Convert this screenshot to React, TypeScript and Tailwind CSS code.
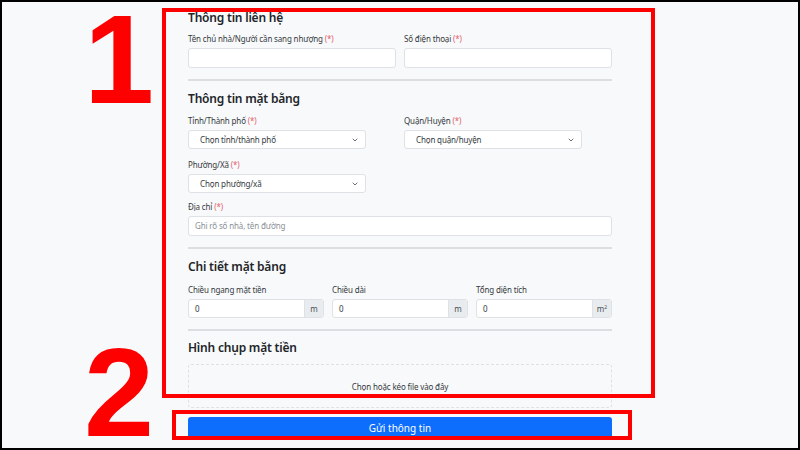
import { ChevronDown } from 'lucide-react'

const font = { fontFamily: '"Noto Sans", "Open Sans", Arial, sans-serif' }
const bigFont = { fontFamily: '"Liberation Sans", Arial, sans-serif' }

function Req() {
  return <span className="text-[#e4606d]"> (*)</span>
}

function Label({ children, req }: { children: React.ReactNode; req?: boolean }) {
  return (
    <div className="text-[8px] leading-[12px] tracking-[-0.15px] text-[#343a40]">
      {children}
      {req && <Req />}
    </div>
  )
}

function TextInput({ placeholder }: { placeholder?: string }) {
  return (
    <div className="mt-[3px] h-[20px] rounded-[3px] border border-[#dee2e6] bg-white px-[6px] text-[8px] leading-[18px] tracking-[-0.15px] text-[#8a9097]">
      {placeholder}
    </div>
  )
}

function Select({ text }: { text: string }) {
  return (
    <div className="mt-[3px] flex h-[19px] w-[178px] items-center justify-between rounded-[3px] border border-[#dee2e6] bg-white pl-[11px] pr-[6px] text-[8px] tracking-[-0.15px] text-[#343a40]">
      <span>{text}</span>
      <ChevronDown className="h-[8px] w-[8px] text-[#495057]" strokeWidth={2.5} />
    </div>
  )
}

function UnitInput({ label, unit }: { label: string; unit: React.ReactNode }) {
  return (
    <div className="flex-1">
      <Label>{label}</Label>
      <div className="mt-[3px] flex h-[19px] rounded-[3px] border border-[#dee2e6] bg-white text-[8px]">
        <div className="flex flex-1 items-center pl-[6px] text-[#343a40]">0</div>
        <div className="flex w-[19px] items-center justify-center border-l border-[#dee2e6] bg-[#e9ecef] text-[#495057]">{unit}</div>
      </div>
    </div>
  )
}

function Heading({ children }: { children: React.ReactNode }) {
  return (
    <div className="h-[16px] text-[12px] font-semibold leading-[16px] tracking-[-0.2px] text-[#212529]">{children}</div>
  )
}

function Divider() {
  return <div className="h-[2px] bg-[#dcdfe2]" />
}

export default function App() {
  return (
    <div className="relative h-[450px] w-[800px] overflow-hidden bg-[#f8f9fa]" style={font}>
      <div className="mx-auto w-[424px] pt-[10px]">
        <Heading>Thông tin liên hệ</Heading>
        <div className="mt-[7px] flex gap-[8px]">
          <div className="flex-1">
            <Label req>Tên chủ nhà/Người cần sang nhượng</Label>
            <TextInput />
          </div>
          <div className="flex-1">
            <Label req>Số điện thoại</Label>
            <TextInput />
          </div>
        </div>
        <div className="mt-[11px]">
          <Divider />
        </div>

        <div className="mt-[10px]">
          <Heading>Thông tin mặt bằng</Heading>
        </div>
        <div className="mt-[8px] flex gap-[38px]">
          <div>
            <Label req>Tỉnh/Thành phố</Label>
            <Select text="Chọn tỉnh/thành phố" />
          </div>
          <div>
            <Label req>Quận/Huyện</Label>
            <Select text="Chọn quận/huyện" />
          </div>
        </div>
        <div className="mt-[10px]">
          <Label req>Phường/Xã</Label>
          <Select text="Chọn phường/xã" />
        </div>
        <div className="mt-[8px]">
          <Label req>Địa chỉ</Label>
          <TextInput placeholder="Ghi rõ số nhà, tên đường" />
        </div>
        <div className="mt-[11px]">
          <Divider />
        </div>

        <div className="mt-[10px]">
          <Heading>Chi tiết mặt bằng</Heading>
        </div>
        <div className="mt-[9px] flex gap-[8px]">
          <UnitInput label="Chiều ngang mặt tiền" unit="m" />
          <UnitInput label="Chiều dài" unit="m" />
          <UnitInput
            label="Tổng diện tích"
            unit={
              <span>
                m<sup className="text-[5px]">2</sup>
              </span>
            }
          />
        </div>
        <div className="mt-[11px]">
          <Divider />
        </div>

        <div className="mt-[9px]">
          <Heading>Hình chụp mặt tiền</Heading>
        </div>
        <div className="mt-[8px] flex h-[44px] items-center justify-center rounded-[3px] border border-dashed border-[#dee2e6] pt-[2px] text-[8px] tracking-[-0.15px] text-[#343a40]">
          Chọn hoặc kéo file vào đây
        </div>
        <div className="mt-[9px] flex h-[23px] items-center justify-center rounded-[3px] bg-[#0d6efd] text-[10px] text-white">
          Gửi thông tin
        </div>
      </div>

      {/* annotations */}
      <div className="pointer-events-none absolute left-[162px] top-[8px] h-[390px] w-[493px] border-4 border-[#ff0000]" />
      <div className="pointer-events-none absolute left-[172px] top-[410px] h-[30px] w-[460px] border-4 border-[#ff0000]" />
      <div className="pointer-events-none absolute left-[84px] top-0 text-[126px] font-bold leading-[120px] text-[#ff0000]" style={bigFont}>
        1
      </div>
      <div className="pointer-events-none absolute left-[84px] top-[337px] text-[126px] font-bold leading-[112px] text-[#ff0000]" style={bigFont}>
        2
      </div>
      <div className="pointer-events-none absolute inset-0 border-2 border-black" />
    </div>
  )
}
